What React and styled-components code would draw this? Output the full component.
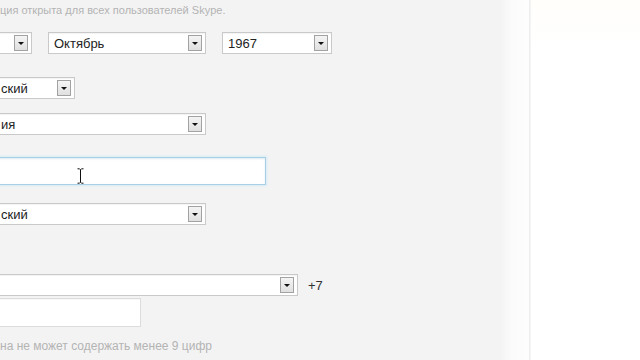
import React from "react";
import styled, { createGlobalStyle } from "styled-components";

const Global = createGlobalStyle`
  * { box-sizing: border-box; }
  html, body { margin: 0; padding: 0; }
  body {
    width: 640px;
    height: 360px;
    overflow: hidden;
    background: #f3f3f3;
    font-family: "Liberation Sans", Arial, sans-serif;
  }
`;

const Page = styled.div`
  display: flex;
  width: 640px;
  height: 360px;
  overflow: hidden;
`;

const Main = styled.div`
  width: 500px;
  flex: none;
  background: #f3f3f3;
  overflow: hidden;
`;

const Fade = styled.div`
  width: 29px;
  flex: none;
  background: linear-gradient(to right, #f3f3f3 0%, #fbfbfb 40%, #fdfdfd 100%);
`;

const Divider = styled.div`
  width: 2px;
  flex: none;
  background: linear-gradient(to right, #ececec, #f6f6f6);
`;

const Side = styled.div`
  flex: 1;
  background: linear-gradient(to bottom, #fffefb 0%, #ffffff 14%, #ffffff 100%);
`;

const Form = styled.div`
  display: flex;
  flex-direction: column;
  align-items: flex-start;
  margin-left: -60px;
`;

const Hint = styled.div`
  margin-top: ${(p) => p.$mt}px;
  padding-left: 60px;
  font-size: ${(p) => p.$size || 12}px;
  line-height: 14px;
  color: #b4b4b4;
  white-space: nowrap;
`;

const Row = styled.div`
  display: flex;
  align-items: center;
  gap: ${(p) => p.$gap || 0}px;
  margin-top: ${(p) => p.$mt}px;
`;

const SelectBox = styled.div`
  display: flex;
  align-items: center;
  width: ${(p) => p.$w}px;
  height: 22px;
  background: #ffffff;
  border: 1px solid #c9c9c9;
  box-shadow: inset 0 1px 1px rgba(0, 0, 0, 0.05);
  padding-left: ${(p) => p.$pl || 5}px;
  padding-right: 3px;
`;

const Value = styled.span`
  flex: 1;
  font-size: 13px;
  color: #222;
  white-space: nowrap;
  overflow: hidden;
`;

const ArrowButton = styled.span`
  display: flex;
  align-items: center;
  justify-content: center;
  width: 14px;
  height: 16px;
  flex: none;
  border: 1px solid #a2a2a2;
  background: linear-gradient(to bottom, #f4f4f4, #e0e0e0);
  &::after {
    content: "";
    display: block;
    width: 0;
    height: 0;
    border-left: 3px solid transparent;
    border-right: 3px solid transparent;
    border-top: 3px solid #111;
    margin-top: 1px;
  }
`;

const Input = styled.div`
  position: relative;
  width: ${(p) => p.$w}px;
  height: ${(p) => p.$h}px;
  background: #ffffff;
  border: 1px solid ${(p) => (p.$focus ? "#a9cfe4" : "#dcdcdc")};
  box-shadow: ${(p) =>
    p.$focus
      ? "0 0 2px 1px #d7ebf5, inset 0 1px 2px rgba(120,170,200,0.25)"
      : "inset 0 1px 1px rgba(0,0,0,0.03)"};
`;

const Caret = styled.svg`
  position: absolute;
  left: ${(p) => p.$x}px;
  top: ${(p) => p.$y}px;
`;

const Prefix = styled.span`
  font-size: 13px;
  color: #333;
  margin-left: 10px;
`;

function Select({ w, value, pl }) {
  return (
    <SelectBox $w={w} $pl={pl}>
      <Value>{value}</Value>
      <ArrowButton />
    </SelectBox>
  );
}

export default function App() {
  return (
    <>
      <Global />
      <Page>
        <Main>
          <Form>
            <Hint $mt={3} $size={11}>ция открыта для всех пользователей Skype.</Hint>
            <Row $mt={15} $gap={16}>
              <Select w={92} value="" />
              <Select w={158} value="Октябрь" />
              <Select w={110} value="1967" />
            </Row>
            <Row $mt={23}>
              <Select w={135} value="ский" pl={60} />
            </Row>
            <Row $mt={14}>
              <Select w={266} value="ия" pl={60} />
            </Row>
            <Row $mt={22}>
              <Input $w={326} $h={28} $focus>
                <Caret $x={136} $y={10} width="7" height="16" viewBox="0 0 7 16">
                  <path
                    d="M0.5 0.8 H2.5 L3.5 1.8 L4.5 0.8 H6.5 M3.5 1.8 V14.2 M0.5 15.2 H2.5 L3.5 14.2 L4.5 15.2 H6.5"
                    fill="none"
                    stroke="#ffffff"
                    strokeWidth="2.4"
                  />
                  <path
                    d="M0.5 0.8 H2.5 L3.5 1.8 L4.5 0.8 H6.5 M3.5 1.8 V14.2 M0.5 15.2 H2.5 L3.5 14.2 L4.5 15.2 H6.5"
                    fill="none"
                    stroke="#111111"
                    strokeWidth="1"
                  />
                </Caret>
              </Input>
            </Row>
            <Row $mt={18}>
              <Select w={266} value="ский" pl={60} />
            </Row>
            <Row $mt={49}>
              <Select w={358} value="" />
              <Prefix>+7</Prefix>
            </Row>
            <Row $mt={2}>
              <Input $w={201} $h={29} />
            </Row>
            <Hint $mt={12}>на не может содержать менее 9 цифр</Hint>
          </Form>
        </Main>
        <Fade />
        <Divider />
        <Side />
      </Page>
    </>
  );
}
